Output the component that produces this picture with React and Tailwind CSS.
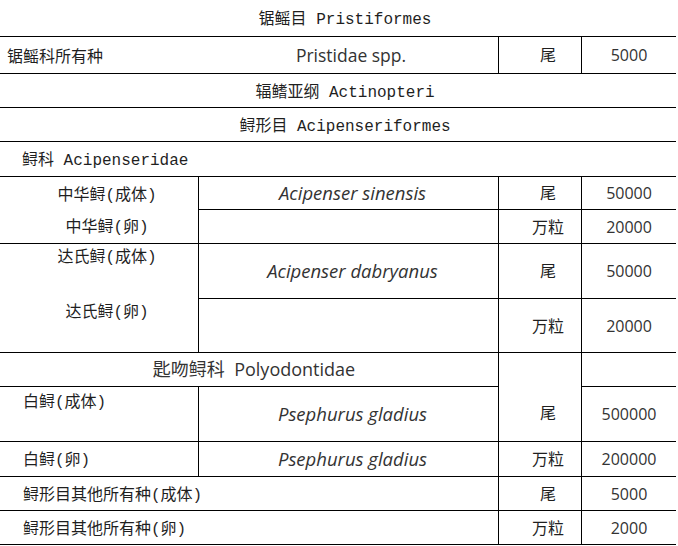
const mono = "font-['Liberation_Mono','Noto_Sans_CJK_SC',monospace] text-[16px] text-[#1f1f1f]";
const sans = "font-['Open_Sans','Noto_Sans_CJK_SC',sans-serif] text-[17.5px] text-[#333]";
const num = "font-['Open_Sans',sans-serif] text-[16px] text-[#333]";

function Cell({ className = "", children }) {
  return <div className={`flex items-center border-black ${className}`}>{children}</div>;
}

function UnitCell({ children }) {
  return (
    <Cell className={`border-b border-r justify-center pl-[16px] pt-[4px] ${mono}`}>{children}</Cell>
  );
}

function NumCell({ children }) {
  return <Cell className={`border-b justify-center ${num}`}>{children}</Cell>;
}

function Species({ children }) {
  return (
    <Cell className={`border-b border-r justify-center pl-[8px] italic ${sans} text-[18.5px]`}>{children}</Cell>
  );
}

export default function App() {
  return (
    <div className="w-[678px] h-[546px] bg-white overflow-hidden">
      <div className="grid w-[676px] grid-cols-[199px_300px_83px_94px] grid-rows-[37px_37px_34px_34px_35px_33px_34px_55px_54px_34px_55px_35px_34px_34px]">
        <Cell className={`col-span-4 border-b justify-center pl-[14px] pt-[4px] ${mono}`}>锯鳐目 Pristiformes</Cell>

        <Cell className={`border-b pl-[7px] pt-[5px] ${mono}`}>锯鳐科所有种</Cell>
        <Cell className={`border-b border-r justify-center pl-[5px] ${sans}`}>Pristidae spp.</Cell>
        <UnitCell>尾</UnitCell>
        <NumCell>5000</NumCell>

        <Cell className={`col-span-4 border-b justify-center pl-[14px] pt-[4px] ${mono}`}>辐鳍亚纲 Actinopteri</Cell>
        <Cell className={`col-span-4 border-b justify-center pl-[14px] pt-[4px] ${mono}`}>鲟形目 Acipenseriformes</Cell>
        <Cell className={`col-span-4 border-b pl-[22px] pt-[4px] ${mono}`}>鲟科 Acipenseridae</Cell>

        <div className={`row-span-2 flex flex-col border-b border-r border-black pl-[16px] ${mono}`}>
          <div className="h-[33px] flex items-center justify-center pt-[5px]">中华鲟(成体)</div>
          <div className="h-[34px] flex items-center justify-center pt-[4px]">中华鲟(卵)</div>
        </div>
        <Species>Acipenser sinensis</Species>
        <UnitCell>尾</UnitCell>
        <NumCell>50000</NumCell>
        <Cell className="border-b border-r" />
        <UnitCell>万粒</UnitCell>
        <NumCell>20000</NumCell>

        <div className={`row-span-2 flex flex-col border-b border-r border-black pl-[16px] ${mono}`}>
          <div className="h-[55px] leading-[28px] text-center">达氏鲟(成体)</div>
          <div className="h-[54px] leading-[28px] text-center">达氏鲟(卵)</div>
        </div>
        <Species>Acipenser dabryanus</Species>
        <UnitCell>尾</UnitCell>
        <NumCell>50000</NumCell>
        <Cell className="border-b border-r" />
        <UnitCell>万粒</UnitCell>
        <NumCell>20000</NumCell>

        <Cell className={`col-span-2 border-b border-r justify-center pl-[10px] whitespace-pre ${sans} text-[18px]`}>匙吻鲟科  Polyodontidae</Cell>
        <div className={`row-span-2 flex items-end justify-center border-b border-r border-black pl-[16px] pb-[14px] ${mono}`}>尾</div>
        <Cell className="border-b" />

        <Cell className={`border-b border-r items-start pl-[23px] pt-[3px] leading-[26px] ${mono}`}>白鲟(成体)</Cell>
        <Species>Psephurus gladius</Species>
        <NumCell>500000</NumCell>

        <Cell className={`border-b border-r pl-[23px] pt-[4px] ${mono}`}>白鲟(卵)</Cell>
        <Species>Psephurus gladius</Species>
        <UnitCell>万粒</UnitCell>
        <NumCell>200000</NumCell>

        <Cell className={`col-span-2 border-b border-r pl-[23px] pt-[4px] ${mono}`}>鲟形目其他所有种(成体)</Cell>
        <UnitCell>尾</UnitCell>
        <NumCell>5000</NumCell>

        <Cell className={`col-span-2 border-b border-r pl-[23px] pt-[4px] ${mono}`}>鲟形目其他所有种(卵)</Cell>
        <UnitCell>万粒</UnitCell>
        <NumCell>2000</NumCell>
      </div>
    </div>
  );
}
